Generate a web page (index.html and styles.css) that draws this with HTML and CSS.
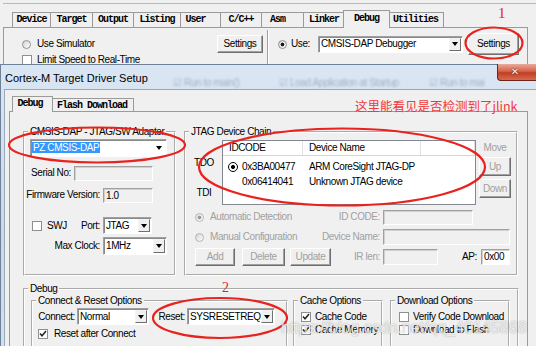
FILE: index.html
```html
<!DOCTYPE html>
<html lang="en">
<head>
  <meta charset="UTF-8">
  <title>Cortex-M Target Driver Setup</title>
  <link rel="stylesheet" href="styles.css">
</head>
<body>
  <!-- Options for Target dialog, lying behind -->
  <div class="opts">
    <div class="opts-line"></div>
    <div class="otabs">
      <span class="tab">Device</span>
      <span class="tab">Target</span>
      <span class="tab">Output</span>
      <span class="tab">Listing</span>
      <span class="tab tab-short">User</span>
      <span class="tab">C/C++</span>
      <span class="tab tab-short">Asm</span>
      <span class="tab">Linker</span>
      <span class="tab tab-on">Debug</span>
      <span class="tab">Utilities</span>
    </div>
    <div class="opage">
      <div class="opane">
        <div class="sim-row">
          <span class="radio"></span>
          <span class="txt6">Use Simulator</span>
          <span class="btn sim-btn">Settings</span>
        </div>
        <div class="limit-row">
          <span class="check"></span>
          <span class="txt5">Limit Speed to Real-Time</span>
        </div>
      </div>
      <div class="osep"></div>
      <div class="opane use-pane">
        <div class="use-row">
          <span class="radio on"></span>
          <span class="use-label">Use:</span>
          <span class="combo dbg-combo"><span class="combo-val">CMSIS-DAP Debugger</span><span class="combo-btn"></span></span>
          <span class="btn use-btn">Settings</span>
        </div>
      </div>
    </div>
  </div>

  <!-- Cortex-M Target Driver Setup -->
  <div class="win">
    <div class="win-title">
      <span class="win-caption">Cortex-M Target Driver Setup</span>
      <span class="glass glass-a">&#9745; Run to main()</span>
      <span class="glass glass-b">&#9745; Load Application at Startup</span>
      <span class="glass glass-c">&#9745; Run to main()</span>
      <span class="win-close"><span class="win-x">&#10005;</span></span>
    </div>
    <div class="win-client">
      <div class="dtabs">
        <span class="tab tab-on dtab-debug">Debug</span>
        <span class="tab">Flash Download</span>
      </div>
      <div class="dpanel">
        <div class="top-groups">
          <fieldset class="grp grp-adapter">
            <legend>CMSIS-DAP - JTAG/SW Adapter</legend>
            <div class="adapter-body">
              <div class="arow arow-1">
                <span class="combo adapter-combo"><span class="combo-val"><span class="sel">PZ CMSIS-DAP</span></span><span class="combo-btn flat"></span></span>
              </div>
              <div class="arow arow-2">
                <span class="lbl serial-lbl">Serial No:</span>
                <span class="edit serial-edit"></span>
              </div>
              <div class="arow arow-3">
                <span class="lbl fw-lbl">Firmware Version:</span>
                <span class="edit fw-edit">1.0</span>
              </div>
              <div class="arow arow-4">
                <span class="check swj-check"></span>
                <span class="swj-lbl">SWJ</span>
                <span class="lbl port-lbl">Port:</span>
                <span class="combo port-combo"><span class="combo-val">JTAG</span><span class="combo-btn"></span></span>
              </div>
              <div class="arow arow-5">
                <span class="lbl fw-lbl">Max Clock:</span>
                <span class="combo clock-combo"><span class="combo-val">1MHz</span><span class="combo-btn"></span></span>
              </div>
            </div>
          </fieldset>

          <fieldset class="grp grp-chain">
            <legend>JTAG Device Chain</legend>
            <div class="chain-top">
              <div class="pins">
                <div>TDO</div>
                <div class="pin-tdi">TDI</div>
              </div>
              <div class="chain-list">
                <div class="list-head"><span>IDCODE</span><span>Device Name</span><span></span></div>
                <div class="list-rows">
                  <div class="list-row">
                    <span class="id-cell"><span class="mark"></span>0x3BA00477</span>
                    <span class="name-cell">ARM CoreSight JTAG-DP</span>
                  </div>
                  <div class="list-row">
                    <span class="id-cell id-plain">0x06414041</span>
                    <span class="name-cell">Unknown JTAG device</span>
                  </div>
                </div>
              </div>
              <div class="move-col">
                <div class="dim move-lbl">Move</div>
                <span class="btn dim up-btn">Up</span>
                <span class="btn dim down-btn">Down</span>
              </div>
            </div>
            <div class="crow crow-a">
              <span class="opt-radio"><span class="radio on dim-radio"></span><span class="dim txt6">Automatic Detection</span></span>
              <span class="lbl dim chain-lbl">ID CODE:</span>
              <span class="edit id-edit"></span>
            </div>
            <div class="crow crow-b">
              <span class="opt-radio"><span class="radio dim-radio"></span><span class="dim txt6">Manual Configuration</span></span>
              <span class="lbl dim chain-lbl">Device Name:</span>
              <span class="edit name-edit"></span>
            </div>
            <div class="crow crow-c">
              <span class="btn dim add-btn">Add</span>
              <span class="btn dim del-btn">Delete</span>
              <span class="btn dim upd-btn">Update</span>
              <span class="lbl dim ir-lbl">IR len:</span>
              <span class="edit ir-edit"></span>
              <span class="lbl ap-lbl">AP:</span>
              <span class="edit white ap-edit">0x00</span>
            </div>
          </fieldset>
        </div>

        <fieldset class="grp grp-debug">
          <legend>Debug</legend>
          <div class="debug-row">
            <fieldset class="grp grp-reset">
              <legend>Connect &amp; Reset Options</legend>
              <div class="rrow">
                <span class="lbl connect-lbl">Connect:</span>
                <span class="combo connect-combo"><span class="combo-val">Normal</span><span class="combo-btn"></span></span>
                <span class="lbl reset-lbl">Reset:</span>
                <span class="combo reset-combo"><span class="combo-val">SYSRESETREQ</span><span class="combo-btn"></span></span>
              </div>
              <div class="crow-check reset-after">
                <span class="check"><svg width="8" height="8" viewBox="0 0 8 8"><path d="M1 3.6 L3 5.8 L7 1" fill="none" stroke="#222" stroke-width="1.5"/></svg></span>
                <span class="txt6">Reset after Connect</span>
              </div>
            </fieldset>
            <fieldset class="grp grp-cache">
              <legend>Cache Options</legend>
              <div class="opt-line first">
                <span class="check"><svg width="8" height="8" viewBox="0 0 8 8"><path d="M1 3.6 L3 5.8 L7 1" fill="none" stroke="#222" stroke-width="1.5"/></svg></span>
                <span class="txt4">Cache Code</span>
              </div>
              <div class="opt-line">
                <span class="check"><svg width="8" height="8" viewBox="0 0 8 8"><path d="M1 3.6 L3 5.8 L7 1" fill="none" stroke="#222" stroke-width="1.5"/></svg></span>
                <span class="txt4">Cache Memory</span>
              </div>
            </fieldset>
            <fieldset class="grp grp-dl">
              <legend>Download Options</legend>
              <div class="opt-line first">
                <span class="check"></span>
                <span class="txt4">Verify Code Download</span>
              </div>
              <div class="opt-line">
                <span class="check"></span>
                <span class="txt4">Download to Flash</span>
              </div>
            </fieldset>
          </div>
        </fieldset>
      </div>
    </div>
  </div>

  <!-- annotations drawn over the screenshot -->
  <svg class="marks" width="536" height="346" viewBox="0 0 536 346">
    <g fill="none" stroke="#e8231f" stroke-width="2.2">
      <ellipse cx="494" cy="43" rx="28.5" ry="15.5"/>
      <ellipse cx="97" cy="145" rx="88" ry="17.5"/>
      <ellipse cx="342" cy="167" rx="143" ry="38.5"/>
      <ellipse cx="220" cy="318" rx="67" ry="20"/>
    </g>
  </svg>
  <span class="num num-1">1</span>
  <span class="num num-2">2</span>
  <span class="note">这里能看见是否检测到了jlink</span>
  <span class="watermark">https://blog.csdn.net/qq_40145868</span>
</body>
</html>
```

FILE: styles.css
```css
* {
  box-sizing: border-box;
}
body {
  margin: 0;
  width: 536px;
  height: 346px;
  overflow: hidden;
  position: relative;
  background: #f0f0f0;
  color: #000;
  font: 10px/12px "Liberation Sans", Arial, sans-serif;
  letter-spacing: -0.4px;
}

/* common controls */
.radio {
  flex: none;
  width: 9px;
  height: 9px;
  border: 1px solid #8e8f8f;
  border-radius: 50%;
  background: linear-gradient(135deg, #d4d4d4, #fff);
}
.radio.on {
  background: radial-gradient(circle, #1c1c1c 0 1.6px, transparent 2.2px), linear-gradient(135deg, #d4d4d4, #fff);
}
.radio.dim-radio {
  border-color: #b4b4b4;
}
.radio.on.dim-radio {
  background: radial-gradient(circle, #9a9a9a 0 1.6px, transparent 2.2px), linear-gradient(135deg, #e0e0e0, #fff);
}
.check {
  flex: none;
  display: flex;
  align-items: center;
  justify-content: center;
  width: 10px;
  height: 10px;
  border: 1px solid #8e8f8f;
  background: #fff;
}
.check svg {
  display: block;
}
.edit {
  flex: none;
  height: 15px;
  padding-left: 2px;
  border: 1px solid;
  border-color: #a0a0a0 #fff #fff #a0a0a0;
  box-shadow: inset 1px 1px #d0d0d0;
  background: #f0f0f0;
  line-height: 13px;
}
.edit.white {
  background: #fff;
}
.combo {
  flex: none;
  display: flex;
  align-items: center;
  height: 17px;
  border: 1px solid;
  border-color: #a0a0a0 #fff #fff #a0a0a0;
  box-shadow: inset 1px 1px #8a8a8a;
  background: #fff;
}
.combo-val {
  flex: 1;
  padding-left: 2px;
  white-space: nowrap;
  overflow: hidden;
}
.combo-btn {
  flex: none;
  display: flex;
  align-items: center;
  justify-content: center;
  width: 12px;
  height: calc(100% - 2px);
  margin-right: 1px;
  border: 1px solid;
  border-color: #f4f4f4 #6f6f6f #6f6f6f #f4f4f4;
  background: #f0f0f0;
}
.combo-btn.flat {
  border-color: #fff;
  background: #fff;
}
.combo-btn::before {
  content: "";
  border: 3.5px solid transparent;
  border-top: 4px solid #000;
  border-bottom: 0;
}
.btn {
  flex: none;
  display: flex;
  align-items: center;
  justify-content: center;
  border: 1px solid;
  border-color: #fff #6f6f6f #6f6f6f #fff;
  box-shadow: inset -1px -1px #a0a0a0;
  background: #f0f0f0;
}
.dim {
  color: #a0a0a0;
}
.lbl {
  flex: none;
  text-align: right;
  white-space: nowrap;
}
.txt4 { margin-left: 4px; white-space: nowrap; }
.txt5 { margin-left: 5px; white-space: nowrap; }
.txt6 { margin-left: 6px; white-space: nowrap; }

/* tabs */
.tab {
  height: 15px;
  border-top: 1px solid #9a9a9a;
  border-right: 1px solid #9a9a9a;
  text-align: center;
  font: bold 10px/14px "Liberation Mono", monospace;
  letter-spacing: -1px;
  white-space: nowrap;
}
.tab:first-child {
  border-left: 1px solid #9a9a9a;
}
.tab-short {
  padding-right: 10px;
}
.tab-on {
  position: relative;
  z-index: 1;
  margin: -2px -2px 0;
  height: 18px;
  line-height: 15px;
  border-left: 1px solid #9a9a9a;
  background: #f0f0f0;
}

/* Options for Target */
.opts {
  height: 64px;
  overflow: hidden;
}
.opts-line {
  margin: 3px 0 0 3px;
  border-top: 1px solid #b9b9b9;
}
.otabs {
  display: grid;
  grid-template-columns: 39px 42px 41px 47px 40px 41px 42px 41px 43px 56px;
  height: 15px;
  margin: 8px 0 0 12px;
}
.opage {
  display: flex;
  width: 525px;
  height: 40px;
  margin-left: 3px;
  border: 1px solid #9a9a9a;
  border-bottom: 0;
}
.opane {
  width: 263px;
  padding: 0 4px 0 18px;
}
.sim-row {
  display: flex;
  align-items: center;
  height: 18px;
  margin-top: 7px;
}
.sim-btn {
  width: 46px;
  height: 18px;
  margin-left: auto;
}
.limit-row {
  display: flex;
  align-items: center;
  height: 10px;
  margin-top: 2px;
}
.osep {
  width: 2px;
  margin-top: 2px;
  border-left: 1px solid #a0a0a0;
  border-right: 1px solid #fff;
}
.use-pane {
  flex: 1;
  padding-left: 9px;
}
.use-row {
  display: flex;
  align-items: center;
  height: 22px;
  margin-top: 5px;
}
.use-label {
  width: 27px;
  margin-left: 4px;
}
.dbg-combo {
  width: 145px;
}
.use-btn {
  width: 51px;
  height: 22px;
  margin-left: 5px;
}

/* Target Driver Setup window */
.win {
  width: 536px;
  height: 282px;
  padding-left: 3px;
  border-top: 1px solid #6e8197;
  border-left: 1px solid #6e8197;
  background: linear-gradient(#dae6f3, #c9d9ec 60%, #d3e0ef);
}
.win-title {
  display: flex;
  height: 24px;
}
.win-caption {
  flex: none;
  width: 168px;
  margin: 6px 0 0 1px;
  font: 11px/14px "Liberation Sans", Arial, sans-serif;
  letter-spacing: 0;
  white-space: nowrap;
}
.glass {
  flex: none;
  align-self: flex-end;
  overflow: hidden;
  white-space: nowrap;
  color: #23364a;
  opacity: .3;
  filter: blur(1.2px);
}
.glass-a { width: 106px; }
.glass-b { width: 150px; }
.glass-c { width: 56px; }
.win-close {
  flex: none;
  align-self: flex-start;
  display: flex;
  justify-content: center;
  width: 39px;
  height: 17px;
  margin: -1px 0 0 auto;
  padding-right: 4px;
  border: 1px solid #6d2418;
  border-top: 0;
  border-right: 0;
  border-radius: 0 0 0 4px;
  background-color: #c94a30;
  background-image: linear-gradient(#eaa99b, #d4644c 45%, #c23d22 55%, #d76c50);
}
.win-x {
  color: #fff;
  font: bold 10px/15px "DejaVu Sans", sans-serif;
  letter-spacing: 0;
  text-shadow: 0 0 1px #3a120b, 0 0 1px #3a120b;
}
.win-client {
  height: 257px;
  border-top: 1px solid #98a9bc;
  border-left: 1px solid #98a9bc;
  background: #f0f0f0;
}
.dtabs {
  display: grid;
  grid-template-columns: 37px 83px;
  height: 13px;
  margin: 8px 0 0 9px;
}
.dtabs .tab {
  height: 13px;
  line-height: 13px;
}
.dtabs .tab-on {
  height: 16px;
  line-height: 14px;
}
.dtab-debug {
  padding-right: 5px;
}
.dpanel {
  width: 519px;
  height: 235px;
  margin-left: 4px;
  border: 1px solid #9a9a9a;
  border-bottom: 0;
}

/* group boxes */
.grp {
  margin: 0;
  padding: 0;
  min-width: 0;
  border: 2px groove #fff;
}
.grp > legend {
  margin-left: 3px;
  padding: 0 2px;
  line-height: 12px;
  white-space: nowrap;
}
.top-groups {
  display: flex;
  gap: 8px;
  height: 150px;
  margin: 14px 0 0 13px;
}
.grp-adapter {
  width: 153px;
}
.grp-chain {
  width: 334px;
}

/* adapter */
.arow {
  display: flex;
  align-items: center;
}
.arow-1 { height: 18px; margin-top: 1px; padding-left: 5px; }
.arow-2 { height: 16px; margin-top: 8px; }
.arow-3 { height: 16px; margin-top: 6px; }
.arow-4 { height: 17px; margin-top: 14px; padding-left: 7px; }
.arow-5 { height: 18px; margin-top: 3px; }
.adapter-combo {
  width: 137px;
  height: 18px;
}
.adapter-combo .combo-val {
  padding-left: 1px;
}
.sel {
  padding: 0 1px;
  background: #3399ff;
  color: #fff;
}
.serial-lbl { width: 46px; }
.serial-edit { width: 79px; margin-left: 3px; }
.fw-lbl { width: 75px; }
.fw-edit { width: 50px; margin-left: 3px; }
.swj-lbl { width: 26px; margin-left: 5px; }
.port-lbl { width: 27px; }
.port-combo { width: 49px; margin-left: 3px; }
.clock-combo { width: 64px; height: 18px; margin-left: 3px; }

/* JTAG chain */
.chain-top {
  display: flex;
  height: 67px;
}
.pins {
  flex: none;
  width: 36px;
  padding-top: 19px;
  text-align: center;
}
.pin-tdi {
  margin-top: 18px;
}
.chain-list {
  flex: none;
  width: 254px;
  height: 65px;
  margin-top: 2px;
  border: 1px solid #828790;
  background: #fff;
}
.list-head {
  display: grid;
  grid-template-columns: 80px 118px 1fr;
  height: 15px;
  border-bottom: 1px solid #d6d6d6;
}
.list-head span {
  padding-left: 6px;
  line-height: 14px;
  border-right: 1px solid #e2e2e2;
}
.list-rows {
  padding-top: 3px;
}
.list-row {
  display: grid;
  grid-template-columns: 80px 1fr;
  align-items: center;
  height: 15px;
  white-space: nowrap;
}
.id-cell {
  display: flex;
  align-items: center;
  padding-left: 5px;
}
.id-plain {
  padding-left: 19px;
}
.mark {
  flex: none;
  width: 10px;
  height: 10px;
  margin-right: 4px;
  border: 1.5px solid #000;
  border-radius: 50%;
  background: radial-gradient(circle, #000 0 1.7px, #fff 2.3px);
}
.name-cell {
  padding-left: 6px;
}
.move-col {
  display: flex;
  flex-direction: column;
  width: 32px;
  margin-left: 3px;
}
.move-lbl {
  margin-top: 4px;
  line-height: 11px;
  text-align: center;
}
.up-btn { height: 19px; margin-top: 4px; }
.down-btn { height: 19px; margin-top: 3px; }
.crow {
  display: flex;
  align-items: center;
}
.crow-a { height: 16px; margin-top: 4px; }
.crow-b { height: 16px; margin-top: 4px; }
.crow-c { height: 18px; margin-top: 3px; }
.opt-radio {
  display: flex;
  align-items: center;
  width: 134px;
  padding-left: 9px;
}
.chain-lbl { width: 60px; }
.id-edit { width: 90px; margin-left: 3px; }
.name-edit { width: 127px; height: 16px; margin-left: 3px; }
.add-btn { width: 40px; height: 18px; margin-left: 9px; }
.del-btn { width: 43px; height: 18px; margin-left: 7px; }
.upd-btn { width: 41px; height: 18px; margin-left: 5px; }
.ir-lbl { width: 49px; }
.ir-edit { width: 55px; height: 16px; margin-left: 3px; }
.ap-lbl { width: 39px; }
.ap-edit { width: 29px; height: 16px; margin-left: 4px; }

/* Debug group */
.grp-debug {
  width: 496px;
  height: 70px;
  margin: 7px 0 0 13px;
}
.debug-row {
  display: flex;
  height: 60px;
  margin-left: 6px;
}
.grp-reset { width: 257px; }
.grp-cache { width: 90px; margin-left: 5px; }
.grp-dl { width: 120px; margin-left: 7px; }
.rrow {
  display: flex;
  align-items: center;
  height: 17px;
  margin-top: 1px;
}
.connect-lbl { width: 42px; }
.connect-combo { width: 72px; margin-left: 2px; }
.reset-lbl { width: 36px; }
.reset-combo { width: 88px; margin-left: 2px; }
.crow-check {
  display: flex;
  align-items: center;
  height: 11px;
  margin-top: 3px;
  padding-left: 5px;
}
.opt-line {
  display: flex;
  align-items: center;
  height: 12px;
  margin-top: 1px;
  padding-left: 6px;
}
.opt-line.first {
  margin-top: 4px;
}
.grp-dl .opt-line {
  padding-left: 7px;
}

/* annotations over the picture */
.marks {
  position: absolute;
  left: 0;
  top: 0;
  pointer-events: none;
}
.num {
  position: absolute;
  color: #e8231f;
  font-family: "Liberation Serif", serif;
  letter-spacing: 0;
}
.num-1 {
  left: 498px;
  top: 6px;
  font-size: 15px;
  line-height: 15px;
}
.num-2 {
  left: 222px;
  top: 281px;
  font-size: 14px;
  line-height: 14px;
}
.note {
  position: absolute;
  left: 355px;
  top: 99px;
  color: #f03a3a;
  font: 12.5px/14px "Noto Sans CJK SC", sans-serif;
  letter-spacing: 0;
  white-space: nowrap;
}
.watermark {
  position: absolute;
  left: 281px;
  top: 320px;
  color: rgba(255, 255, 255, .75);
  text-shadow: 0 0 1.5px rgba(80, 80, 80, .55);
  font: 16px/16px "Liberation Sans", Arial, sans-serif;
  letter-spacing: 0;
  white-space: nowrap;
}
```
